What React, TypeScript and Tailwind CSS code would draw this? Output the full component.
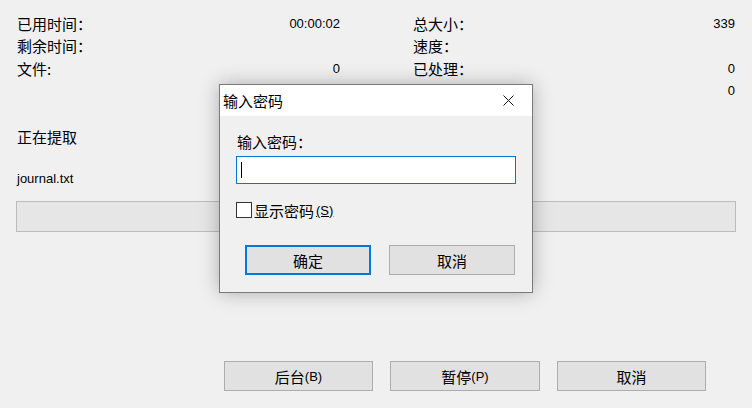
import React from 'react';

const zh = "font-['Noto_Sans_CJK_SC',sans-serif] text-[15px]";
const en = "font-['Liberation_Sans','Noto_Sans_CJK_SC',sans-serif] text-[13px]";

function Row({ label, value }: { label: string; value?: string }) {
  return (
    <div className="flex items-center justify-between h-[22.5px]">
      <span className={zh}>{label}</span>
      <span className={en}>{value}</span>
    </div>
  );
}

function WinButton({ children, focused }: { children: React.ReactNode; focused?: boolean }) {
  return (
    <button
      className={`flex flex-1 items-center justify-center bg-[#e1e1e1] text-black ${
        focused ? 'border-2 border-[#0078d7]' : 'border border-[#adadad]'
      }`}
    >
      {children}
    </button>
  );
}

export default function App() {
  return (
    <div className="relative w-[752px] h-[408px] overflow-hidden bg-[#f0f0f0] text-black leading-none">
      {/* stats */}
      <div className="flex px-[17px] pt-[12px] gap-[73px]">
        <div className="w-[323px]">
          <Row label="已用时间：" value="00:00:02" />
          <Row label="剩余时间：" />
          <Row label="文件:" value="0" />
        </div>
        <div className="flex-1">
          <Row label="总大小：" value="339" />
          <Row label="速度：" />
          <Row label="已处理：" value="0" />
          <Row label="已解压大小：" value="0" />
        </div>
      </div>

      <div className="px-[16px]">
        <div className={`${zh} mt-[27px] pl-px`}>正在提取</div>
        <div className={`${en} mt-[28px] pl-px`}>journal.txt</div>
        <div className="mt-[16px] h-[31px] w-[720px] border border-[#bcbcbc] bg-[#e6e6e6]" />
      </div>

      <div className="flex justify-end gap-[17px] pr-[46px] mt-[129px]">
        <div className="w-[149px] h-[30px] flex">
          <WinButton>
            <span className={zh}>后台</span>
            <span className={en}>(B)</span>
          </WinButton>
        </div>
        <div className="w-[150px] h-[30px] flex">
          <WinButton>
            <span className={zh}>暂停</span>
            <span className={en}>(P)</span>
          </WinButton>
        </div>
        <div className="w-[149px] h-[30px] flex">
          <WinButton>
            <span className={zh}>取消</span>
          </WinButton>
        </div>
      </div>

      {/* password dialog */}
      <div className="absolute left-[219px] top-[84px] w-[314px] h-[209px] border border-[#7a7a7a] bg-[#f0f0f0] shadow-[0_0_18px_rgba(0,0,0,0.28)] flex flex-col">
        <div className="h-[31px] bg-white flex items-center justify-between pl-[3px] pr-[18px]">
          <span className={zh}>输入密码</span>
          <svg width="11" height="11" viewBox="0 0 11 11">
            <path d="M0.5 0.5 L10.5 10.5 M10.5 0.5 L0.5 10.5" stroke="#111" strokeWidth="1" />
          </svg>
        </div>
        <div className="flex flex-col px-[16px]">
          <div className={`${zh} mt-[18px] pl-px`}>输入密码：</div>
          <div className="mt-[7px] h-[28px] w-[280px] border border-[#0078d7] bg-white flex items-center pl-[4px]">
            <div className="w-px h-[16px] bg-black" />
          </div>
          <div className="mt-[18px] flex items-center gap-[2px]">
            <div className="w-[16px] h-[16px] border border-[#333] bg-white" />
            <span className={zh}>显示密码</span>
            <span className={`${en} underline`}>(S)</span>
          </div>
          <div className="mt-[27px] pl-[9px] flex gap-[18px]">
            <div className="w-[126px] h-[30px] flex">
              <WinButton focused>
                <span className={zh}>确定</span>
              </WinButton>
            </div>
            <div className="w-[126px] h-[30px] flex">
              <WinButton>
                <span className={zh}>取消</span>
              </WinButton>
            </div>
          </div>
        </div>
      </div>
    </div>
  );
}
